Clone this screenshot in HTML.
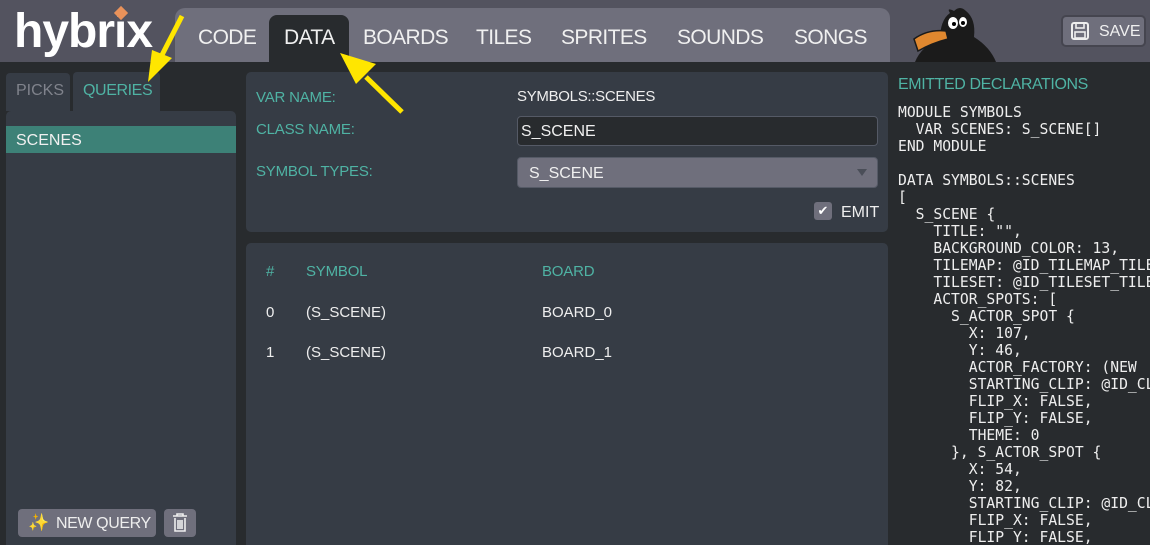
<!DOCTYPE html>
<html><head><style>
*{margin:0;padding:0;box-sizing:border-box}
html,body{width:1150px;height:545px;overflow:hidden}
body{background:#282b2e;font-family:"Liberation Sans",sans-serif;position:relative;color:#e8e8e8}
.hdr{position:absolute;left:0;top:0;width:1150px;height:62px;background:#53535f}
.abs{position:absolute}
.tabs{left:175px;top:8px;width:715px;height:54px;background:#6f6f7c;border-radius:10px 10px 0 0}
.tab{position:absolute;top:26px;font-size:21px;color:#f0f0f0;letter-spacing:-0.6px}
.panel{background:#363c45;border-radius:5px}
.lbl{color:#4fb3a4;font-size:15px;position:absolute;letter-spacing:-0.2px}
.mono{font-family:"DejaVu Sans Mono","Liberation Mono",monospace;font-size:14.7px;line-height:17px;color:#eee;white-space:pre;position:absolute;left:898px;top:104px}
.t{position:absolute;font-size:15px;color:#eee}
</style></head><body>
<div class="hdr"></div>
<div class="abs" style="left:14px;top:4px;font-size:48px;font-weight:bold;color:#fff;letter-spacing:-1px">hybrix</div>
<div class="abs" style="left:116px;top:8px;width:10px;height:10px;background:#e9925a;transform:rotate(45deg)"></div>
<div class="abs tabs"></div>
<div class="abs" style="left:269px;top:15px;width:80px;height:47px;background:#282b2e;border-radius:8px 8px 0 0"></div>
<div class="tab" style="left:198px">CODE</div>
<div class="tab" style="left:284px">DATA</div>
<div class="tab" style="left:363px">BOARDS</div>
<div class="tab" style="left:476px">TILES</div>
<div class="tab" style="left:561px">SPRITES</div>
<div class="tab" style="left:677px">SOUNDS</div>
<div class="tab" style="left:794px">SONGS</div>
<svg class="abs" style="left:910px;top:5px" width="90" height="57" viewBox="0 0 90 57">
<path d="M5 57 Q12 40 30 35 Q30 15 40 8 Q36 2 44 6 Q50 0 56 6 Q66 14 64 32 Q80 42 86 57Z" fill="#1b1b1b"/>
<path d="M4 34 Q18 24 36 26 L38 34 Q22 38 8 46 Z" fill="#e0882f" stroke="#1b1b1b" stroke-width="1.5"/>
<ellipse cx="43" cy="18" rx="5" ry="6" fill="#fff"/><ellipse cx="53" cy="17" rx="4" ry="5" fill="#fff"/>
<circle cx="44" cy="19" r="2" fill="#000"/><circle cx="53" cy="18" r="2" fill="#000"/>
</svg>
<div class="abs" style="left:1061px;top:15px;width:85px;height:32px;background:#6f6f7c;border:2px solid #45454f;border-radius:5px;font-size:16px;color:#f0f0f0;padding:6px 0 0 36px">SAVE</div>
<svg class="abs" style="left:1071px;top:22px" width="18" height="18" viewBox="0 0 18 18"><rect x="1" y="1" width="16" height="16" rx="2" fill="none" stroke="#eee" stroke-width="2"/><rect x="5" y="1" width="8" height="5" fill="none" stroke="#eee" stroke-width="1.6"/><rect x="4" y="10" width="10" height="6" fill="none" stroke="#eee" stroke-width="1.6"/></svg>

<div class="abs" style="left:6px;top:73px;width:64px;height:38px;background:#363c45;border-radius:4px 4px 0 0"></div>
<div class="abs" style="left:16px;top:82px;font-size:16px;color:#80838c">PICKS</div>
<div class="abs" style="left:73px;top:72px;width:87px;height:39px;background:#363c45;border-radius:4px 4px 0 0"></div>
<div class="abs" style="left:83px;top:82px;font-size:16px;color:#4fb3a4;letter-spacing:-0.4px">QUERIES</div>
<div class="abs panel" style="left:6px;top:111px;width:230px;height:440px"></div>
<div class="abs" style="left:6px;top:126px;width:230px;height:27px;background:#3d8177"></div>
<div class="abs" style="left:16px;top:132px;font-size:16px;color:#f0f0f0">SCENES</div>
<div class="abs" style="left:18px;top:509px;width:138px;height:28px;background:#6f6f7c;border-radius:4px;font-size:16px;color:#eee;padding:6px 0 0 38px;letter-spacing:-0.4px">NEW QUERY</div>
<div class="abs" style="left:28px;top:513px;color:#f1de6b;font-size:17px">✨</div>
<div class="abs" style="left:164px;top:509px;width:32px;height:28px;background:#6f6f7c;border-radius:4px"></div>
<svg class="abs" style="left:171px;top:513px" width="18" height="20" viewBox="0 0 18 20"><path d="M2 3H16M6 3V1H12V3M4 5V18H14V5M7 7V16M9 7V16M11 7V16" fill="none" stroke="#eee" stroke-width="1.6"/></svg>

<div class="abs panel" style="left:246px;top:72px;width:642px;height:160px"></div>
<div class="lbl" style="left:256px;top:89px">VAR NAME:</div>
<div class="lbl" style="left:256px;top:121px">CLASS NAME:</div>
<div class="lbl" style="left:256px;top:163px">SYMBOL TYPES:</div>
<div class="t" style="left:517px;top:88px;letter-spacing:-0.3px">SYMBOLS::SCENES</div>
<div class="abs" style="left:517px;top:116px;width:361px;height:30px;background:#282b2e;border:1.5px solid #555a66;border-radius:4px;font-size:16px;padding:6px 0 0 3px;color:#f0f0f0">S_SCENE</div>
<div class="abs" style="left:517px;top:157px;width:361px;height:31px;background:#6f6f7c;border:1.5px solid #555a66;border-radius:4px;font-size:16px;padding:7px 0 0 11px;color:#f0f0f0">S_SCENE</div>
<div class="abs" style="left:857px;top:169px;width:0;height:0;border-left:5px solid transparent;border-right:5px solid transparent;border-top:7px solid #4a4e58"></div>
<div class="abs" style="left:814px;top:202px;width:18px;height:18px;background:#6f6f7c;border-radius:3px;color:#fff;font-size:13px;text-align:center;line-height:18px">✔</div>
<div class="t" style="left:841px;top:204px;font-size:16px">EMIT</div>

<div class="abs panel" style="left:246px;top:243px;width:642px;height:310px"></div>
<div class="lbl" style="left:266px;top:263px">#</div>
<div class="lbl" style="left:306px;top:263px">SYMBOL</div>
<div class="lbl" style="left:542px;top:263px">BOARD</div>
<div class="t" style="left:266px;top:304px">0</div><div class="t" style="left:306px;top:304px">(S_SCENE)</div><div class="t" style="left:542px;top:304px">BOARD_0</div>
<div class="t" style="left:266px;top:344px">1</div><div class="t" style="left:306px;top:344px">(S_SCENE)</div><div class="t" style="left:542px;top:344px">BOARD_1</div>

<div class="lbl" style="left:898px;top:76px;font-size:16px;letter-spacing:-0.4px">EMITTED DECLARATIONS</div>
<div class="mono">MODULE SYMBOLS
  VAR SCENES: S_SCENE[]
END MODULE

DATA SYMBOLS::SCENES
[
  S_SCENE {
    TITLE: "",
    BACKGROUND_COLOR: 13,
    TILEMAP: @ID_TILEMAP_TILEMAP
    TILESET: @ID_TILESET_TILESET
    ACTOR_SPOTS: [
      S_ACTOR_SPOT {
        X: 107,
        Y: 46,
        ACTOR_FACTORY: (NEW
        STARTING_CLIP: @ID_CLIP
        FLIP_X: FALSE,
        FLIP_Y: FALSE,
        THEME: 0
      }, S_ACTOR_SPOT {
        X: 54,
        Y: 82,
        STARTING_CLIP: @ID_CLIP
        FLIP_X: FALSE,
        FLIP_Y: FALSE,</div>

<svg class="abs" style="left:0;top:0" width="1150" height="545">
<g stroke="#ffe600" stroke-width="5" fill="#ffe600">
<line x1="182" y1="16" x2="162" y2="55"/>
<polygon points="148,82 172,58 152,50" stroke="none"/>
<line x1="402" y1="112" x2="366" y2="77"/>
<polygon points="340,53 376,64 356,84" stroke="none"/>
</g>
</svg>
</body></html>
